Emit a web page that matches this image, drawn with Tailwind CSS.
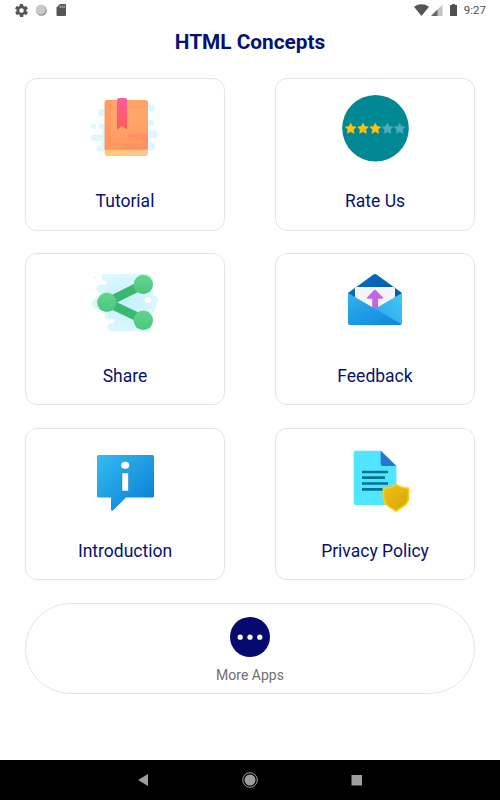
<!DOCTYPE html>
<html lang="en">
<head>
<meta charset="UTF-8">
<meta name="viewport" content="width=device-width, initial-scale=1.0">
<title>HTML Concepts</title>
<script src="https://cdn.jsdelivr.net/npm/@tailwindcss/browser@4"></script>
</head>
<body class="bg-white font-['Roboto',sans-serif]">
<div class="w-[500px] h-[800px] flex flex-col overflow-hidden">

<!-- Status bar -->
<header class="h-5 shrink-0 flex items-center justify-between pl-[15px] pr-[13px]">
<div class="flex items-center gap-[7px]">
<svg class="w-[13px] h-[13px]" viewBox="2 2 20 20"><path fill="#555" d="M19.4 13c0-.3.1-.6.1-1s0-.7-.1-1l2.1-1.6c.2-.2.2-.4.1-.6l-2-3.5c-.1-.2-.4-.3-.6-.2l-2.5 1c-.5-.4-1.1-.7-1.7-1l-.4-2.6c0-.3-.2-.5-.5-.5h-4c-.3 0-.5.2-.5.4l-.4 2.7c-.6.2-1.1.6-1.7 1l-2.5-1c-.2-.1-.4 0-.6.2l-2 3.5c-.1.2-.1.5.1.6L4.6 11c0 .3-.1.7-.1 1s0 .7.1 1l-2.1 1.6c-.2.2-.2.4-.1.6l2 3.5c.1.2.4.3.6.2l2.5-1c.5.4 1.1.7 1.7 1l.4 2.6c0 .3.2.5.5.5h4c.2 0 .5-.2.5-.4l.4-2.7c.6-.2 1.1-.6 1.7-1l2.5 1c.2.1.5 0 .6-.2l2-3.5c.1-.2.1-.5-.1-.6L19.4 13zM12 15.500a3.500 3.500 0 1 1 0-7 3.500 3.500 0 0 1 0 7z"/></svg>
<svg class="w-3 h-3" viewBox="0 0 12 12"><circle cx="6.4" cy="6.4" r="5.3" fill="#8c8c8c"/><circle cx="5.7" cy="5.7" r="5" fill="#c9c9c9"/></svg>
<svg class="w-[11px] h-3 ml-[2px]" viewBox="0 0 11 12"><path fill="#555" d="M4 0h5q1 0 1 1v10q0 1-1 1H1.500q-1 0-1-1V3.500z"/><path stroke="#bbb" d="M4.200 1.500v2.500M6.200 1.500v2.500M8.200 1.500v2.500"/></svg>
</div>
<div class="flex items-center">
<svg class="w-[15px] h-3" viewBox="0 0 15 12"><path fill="#555" d="M7.500 12 0 2.700Q3.500.3 7.500.3T15 2.700z"/></svg>
<svg class="w-3 h-3 ml-[2px]" viewBox="0 0 12 12"><path fill="#c4c4c4" d="M11.500.5V12H0z"/><path fill="#666" d="M6.500 5.500V12H0z"/></svg>
<svg class="w-[7px] h-3 ml-[7px]" viewBox="0 0 7 12"><path fill="#505050" d="M2 0h3v1h1.500q.5 0 .5.500v10q0 .5-.5.500h-6q-.5 0-.5-.5v-10Q0 1 .5 1H2z"/></svg>
<span class="ml-[7px] mr-px text-[11.5px] leading-5 text-[#505050]">9:27</span>
</div>
</header>

<h1 class="mt-2 h-7 text-center text-[20.8px] leading-7 font-bold text-[#051271]">HTML Concepts</h1>

<main class="mt-[22px] px-[25px]">
<div class="grid grid-cols-2 auto-rows-[153px] gap-x-[50px] gap-y-[22px]">

<section class="h-[153px] border border-[#e5e5e5] rounded-xl flex flex-col items-center pt-[11px]">
<svg class="w-20 h-20 shrink-0" viewBox="0 0 80 80">
<defs>
<linearGradient id="cover" x1="0" y1="0" x2="0" y2="1"><stop offset="0" stop-color="#ffa368"/><stop offset=".35" stop-color="#ffa768"/><stop offset="1" stop-color="#ff9461"/></linearGradient>
<linearGradient id="ribbon" x1="0" y1="0" x2="0" y2="1"><stop offset="0" stop-color="#fb5d9e"/><stop offset="1" stop-color="#ff5b56"/></linearGradient>
<linearGradient id="pages" x1="0" y1="0" x2="1" y2="0"><stop offset="0" stop-color="#ffc873"/><stop offset="1" stop-color="#ffc695"/></linearGradient>
</defs>
<g fill="#dcf7ff">
<circle cx="8.500" cy="36.500" r="2.700"/>
<path d="M20 19h-3.500a3.500 3.500 0 0 0 0 7q1 2.500-1 4.500" />
<path d="M20 19h-3.500a3.500 3.500 0 0 0 0 7H20z"/>
<path d="M20 33.700h-3.500a2.800 2.800 0 0 0 0 5.600q2 2.600 0 5.200H9a3.200 3.200 0 0 0 0 6.400h6q3 1.500 1 4.500h-2a3.200 3.200 0 0 0 0 6.200H22z"/>
<path d="M60 14.800h6.500a3.400 3.400 0 0 1 0 6.800H64q-3 4 0 8.400h2a2.800 2.800 0 0 1 0 5.600h-2q-1 2.400 1 4.900h4.500a3.700 3.700 0 0 1 0 7.400H66q-2 2.500 0 4.600h.5a3.500 3.500 0 0 1 0 8H60z"/>
</g>
<rect x="19.700" y="10" width="43.300" height="52" rx="2.500" fill="url(#cover)"/>
<path d="M22 10h4v49h-6.300V12.300q0-2.300 2.300-2.300z" fill="#ff965f" opacity=".7"/>
<circle cx="45.500" cy="46.500" r="2.700" fill="#ff8d61"/>
<path d="M48 43.700" />
<path d="M51 43.700h12V59H42.500a2.300 2.300 0 0 1 0-4.600h13.500a2.500 2.500 0 0 0 0-5h-5a2.800 2.800 0 0 1 0-5.700z" fill="#ff8f64"/>
<path d="M22 59.700h38.500q2.500 0 2.500-2v5.600q0 2.700-2.700 2.700H22.500q-2.800 0-2.800-2.700V62q0-2.300 2.300-2.300z" fill="url(#pages)"/>
<path d="M34 8h6q2.200 0 2.200 2.200v28.600q-.2.900-1 .2L37 35.800 33.200 39q-1 .7-1.200-.2V10.200Q32 8 34 8z" fill="url(#ribbon)"/>
</svg>
<p class="mt-[19px] text-[17.5px] leading-6 text-[#051271]">Tutorial</p>
</section>

<section class="h-[153px] border border-[#e5e5e5] rounded-xl flex flex-col items-center pt-[11px]">
<svg class="w-20 h-20 shrink-0" viewBox="0 0 80 80">
<defs><path id="star" d="M0-5 1.700-1.800 5.300-1.300 2.700 1.300 3.300 5 0 3.300-3.300 5-2.700 1.300-5.300-1.300-1.700-1.800z" stroke-width=".7" stroke-linejoin="round"/></defs>
<circle cx="40.500" cy="38.200" r="33.300" fill="#008894"/>
<g fill="#ffc20e" stroke="#ffc20e"><use href="#star" x="15.700" y="38.300"/><use href="#star" x="28" y="38.300"/><use href="#star" x="40.300" y="38.300"/></g>
<g fill="#4dadb7" stroke="#4dadb7"><use href="#star" x="52.500" y="38.300"/><use href="#star" x="64.700" y="38.300"/></g>
</svg>
<p class="mt-[19px] text-[17.5px] leading-6 text-[#051271]">Rate Us</p>
</section>

<section class="h-[152px] border border-[#e5e5e5] rounded-xl flex flex-col items-center pt-[11px]">
<svg class="w-20 h-20 shrink-0" viewBox="0 0 80 80">
<defs>
<linearGradient id="node" x1="0" y1="0" x2="0" y2="1"><stop offset="0" stop-color="#62d68b"/><stop offset="1" stop-color="#4cc57d"/></linearGradient>
<radialGradient id="haze"><stop offset="0" stop-color="#c4effe"/><stop offset="1" stop-color="#dcf7ff"/></radialGradient>
</defs>
<path fill="url(#haze)" d="M20 9h43q5 1 5 6v15.500h.5a4.200 4.200 0 0 1 2.300 8q1.500 8-3.800 9V62q-1 4-5 4.300H26a4.200 4.200 0 0 1-1-8h3q3-1.500 0-4h-5q-4-.5-3-6-2-2-5-4.500h-3.500a4.500 4.500 0 0 1 0-10h4q2-2 3-6H15.500a3.800 3.800 0 0 1 0-8H20q3-1.500 0-4h-1a3.500 3.500 0 0 1 1-6.800z"/>
<rect x="59.500" y="32.500" width="7" height="5.500" rx="2.750" fill="#fff"/>
<circle cx="14.500" cy="10" r=".5" fill="#9ce5df"/><circle cx="10.500" cy="12.500" r=".5" fill="#9ce5df"/>
<path d="M59 19 22 37.500 59 55" fill="none" stroke="#3bb76f" stroke-width="9"/>
<g fill="url(#node)"><circle cx="21.800" cy="37.300" r="9.700"/><circle cx="58.300" cy="19.500" r="9.700"/><circle cx="58.300" cy="55.300" r="9.700"/></g>
</svg>
<p class="mt-[19px] text-[17.5px] leading-6 text-[#051271]">Share</p>
</section>

<section class="h-[152px] border border-[#e5e5e5] rounded-xl flex flex-col items-center pt-[11px]">
<svg class="w-20 h-20 shrink-0" viewBox="0 0 80 80">
<defs>
<linearGradient id="flap" x1="0" y1="0" x2="1" y2="1"><stop offset="0" stop-color="#0670c7"/><stop offset="1" stop-color="#0052a3"/></linearGradient>
<linearGradient id="front" x1="0" y1="0" x2=".8" y2="1"><stop offset="0" stop-color="#32b2ef"/><stop offset="1" stop-color="#0f8add"/></linearGradient>
<linearGradient id="side" x1="1" y1="0" x2="0" y2="1"><stop offset="0" stop-color="#45c6f8"/><stop offset="1" stop-color="#26a5e8"/></linearGradient>
</defs>
<path d="M13 28 38.500 9.600q1.500-1.200 3 0L67 28v27H13z" fill="url(#flap)"/>
<path d="M20 23.500q0-1.500 1.500-1.500h37q1.500 0 1.500 1.500V45H20z" fill="#f4f4f4"/>
<path d="M37.200 46V33.700h-4.700q-1.300-.3-.3-1.500l6.800-7q1-.8 2 0l6.800 7q1 1.200-.3 1.500h-4.500V46z" fill="#c465e8"/>
<path d="M67 28v29.500q0 1.500-1 2.300L38 45z" fill="url(#side)"/>
<path d="M13 28 66.500 59.300q-.5.700-1.500.7H15q-2 0-2-2z" fill="url(#front)"/>
</svg>
<p class="mt-[19px] text-[17.5px] leading-6 text-[#051271]">Feedback</p>
</section>

<section class="h-[152px] border border-[#e5e5e5] rounded-xl flex flex-col items-center pt-[11px]">
<svg class="w-20 h-20 shrink-0" viewBox="0 0 80 80">
<defs><linearGradient id="bubble" x1="0" y1="0" x2="1" y2="1"><stop offset="0" stop-color="#34bdf2"/><stop offset="1" stop-color="#087ad3"/></linearGradient></defs>
<path d="M13.500 15h54q1.500 0 1.500 1.500v39.500q0 1.500-1.500 1.500H41L28.200 70.200q-1.900 1.200-2.200-.8V57.500H13.500q-1.500 0-1.500-1.500V16.500q0-1.500 1.500-1.500z" fill="url(#bubble)"/>
<g fill="#fff" stroke="#1878ad" stroke-width=".4"><ellipse cx="40.200" cy="25.300" rx="4.300" ry="3.800"/><rect x="37" y="33" width="6.400" height="18"/></g>
</svg>
<p class="mt-[19px] text-[17.5px] leading-6 text-[#051271]">Introduction</p>
</section>

<section class="h-[152px] border border-[#e5e5e5] rounded-xl flex flex-col items-center pt-[11px]">
<svg class="w-20 h-20 shrink-0" viewBox="0 0 80 80">
<defs><linearGradient id="shield" x1="0" y1="0" x2="1" y2="1"><stop offset="0" stop-color="#efc01a"/><stop offset="1" stop-color="#d9a500"/></linearGradient></defs>
<path d="M20.700 10.700h25L61.400 26v39H20.700q-2 0-2-2V12.700q0-2 2-2z" fill="#50e6ff"/>
<path d="M45.700 10.700 61.400 26H47.700q-2 0-2-2z" fill="#2b74d4"/>
<path d="M27 32h26M27 37.700h23M27 43.500h26M27 49.300h26" stroke="#057093" stroke-width="2.700"/>
<path d="M61 43.500q-6 4.200-13.400 4v9c0 9.300 7.200 11.200 13.400 15.700 6-4.500 13.400-6.400 13.400-15.700v-9q-7.400.2-13.400-4z" fill="#ffcf0f"/>
<path d="M61 45.500q-5.500 3.500-11.700 3.700v7.300c0 8.100 5.900 9.500 11.700 13.700 5.800-4.200 11.700-5.600 11.700-13.700v-7.300q-6.200-.2-11.700-3.700z" fill="url(#shield)"/>
</svg>
<p class="mt-[19px] text-[17.5px] leading-6 text-[#051271]">Privacy Policy</p>
</section>
</div>

<section class="mt-[22px] h-[91px] border border-[#e5e5e5] rounded-full flex flex-col items-center pt-[13px]">
<svg class="w-10 h-10 shrink-0" viewBox="0 0 40 40"><circle cx="20" cy="20" r="20" fill="#080970"/><g fill="#fff"><circle cx="10.200" cy="20.200" r="2.600"/><circle cx="20" cy="20.200" r="2.600"/><circle cx="29.800" cy="20.200" r="2.600"/></g></svg>
<p class="mt-2 text-sm leading-5 text-[#707070]">More Apps</p>
</section>
</main>

<!-- Navigation bar -->
<nav class="mt-auto h-10 shrink-0 bg-black flex items-center justify-between px-[136px]">
<svg class="w-4 h-4" viewBox="0 0 16 16"><path fill="#9e9e9e" d="M12 2v12L2 8z"/></svg>
<svg class="w-4 h-4" viewBox="0 0 16 16"><circle cx="8" cy="8" r="7.300" fill="none" stroke="#9e9e9e"/><circle cx="8" cy="8" r="5.500" fill="#9e9e9e"/></svg>
<svg class="w-4 h-4" viewBox="0 0 16 16"><path fill="#9e9e9e" d="M3.500 3H14v10.500H3.500z"/></svg>
</nav>
</div>
</body>
</html>
